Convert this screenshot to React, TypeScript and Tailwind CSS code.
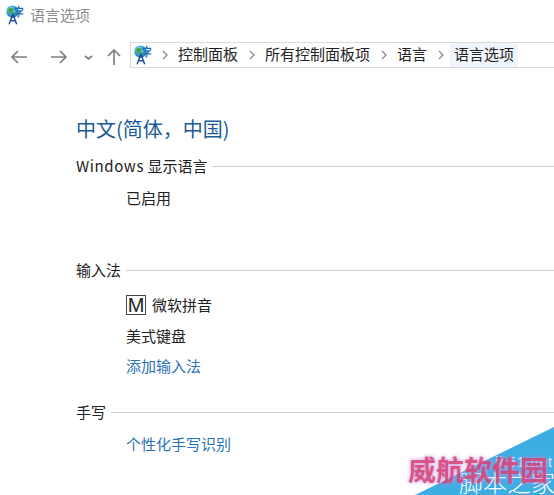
import React from 'react';

const cjk = '"Noto Sans CJK SC", "Liberation Sans", sans-serif';

function LangIcon() {
  return (
    <svg width="20" height="20" viewBox="0 0 22 24" className="shrink-0">
      <defs>
        <radialGradient id="globe" cx="0.4" cy="0.35" r="0.7">
          <stop offset="0" stopColor="#9fe0f0" />
          <stop offset="0.6" stopColor="#2f9fd0" />
          <stop offset="1" stopColor="#1f5fa8" />
        </radialGradient>
      </defs>
      <circle cx="8" cy="8" r="7.5" fill="url(#globe)" />
      <path d="M3 5 C5 3 8 3 9 5 C10 7 7 8 7 10 C6 12 4 10 3 8 Z" fill="#4aa03c" />
      <path d="M10 10 C12 9 13 10 13 12 L10 13 Z" fill="#5aae46" />
      <path d="M4 23 L8.5 11 L13 23 M5.8 19 H11.2" fill="none" stroke="#1f4f9c" strokeWidth="1.8" />
      <path d="M10 4 H21 M15.5 1 V4 M11 4 V6 M20 4 V6 M12 7 H19 L15.5 10 V14 L14 14.5 M10 10.5 H21" fill="none" stroke="#1f6fc0" strokeWidth="1.5" />
    </svg>
  );
}

function Crumb({ label, last }: { label: string; last?: boolean }) {
  return (
    <>
      <svg width="8" height="10" viewBox="0 0 8 10" className="ml-[5px] mr-[4px] shrink-0">
        <path d="M2 1 L6 5 L2 9" fill="none" stroke="#8a8a8a" strokeWidth="1.3" />
      </svg>
      <span className={last ? 'bg-[#f0f5fb] h-[24px] leading-[22px] ml-[1px] px-[4px] text-[#222]' : 'px-[5px] leading-[22px] h-[24px] text-[#222]'}>{label}</span>
    </>
  );
}

function Section({ title, children }: { title: React.ReactNode; children?: React.ReactNode }) {
  return (
    <div>
      <div className="flex items-center gap-[5px] h-[22px]">
        <span className="text-[15px] text-[#222] whitespace-nowrap">{title}</span>
        <div className="flex-1 h-px bg-[#cfcfcf]" />
      </div>
      {children}
    </div>
  );
}

export default function App() {
  return (
    <div className="relative w-[554px] h-[495px] overflow-hidden bg-white" style={{ fontFamily: cjk }}>
      <div className="flex items-center h-[30px] pl-[5px] gap-[5px]">
        <LangIcon />
        <span className="text-[15px] text-[#8c8c8c]">语言选项</span>
      </div>

      <div className="flex items-center h-[30px] mt-[10px]">
        <svg width="130" height="24" viewBox="0 0 130 24" className="shrink-0">
          <g fill="none" stroke="#7f7f7f" strokeWidth="1.7">
            <path d="M27 14 H12 M18 8 L12 14 L18 20" />
            <path d="M51 14 H66 M60 8 L66 14 L60 20" />
            <path d="M85 13 L88.5 16 L92 13" />
            <path d="M114 22 V7 M108 13 L114 7 L120 13" />
          </g>
        </svg>
        <div className="flex items-center h-[26px] w-[424px] border-y border-l border-[#d9d9d9] text-[15px] whitespace-nowrap">
          <div className="ml-[2px] mr-[3px]"><LangIcon /></div>
          <Crumb label="控制面板" />
          <Crumb label="所有控制面板项" />
          <Crumb label="语言" />
          <Crumb label="语言选项" last />
        </div>
      </div>

      <div className="pl-[76px] pt-[44px]">
        <h1 className="text-[20px] leading-[30px] text-[#1a5a96] font-normal">中文(简体，中国)</h1>
        <div className="mt-[11px]">
          <Section title={<><span className="tracking-[0.6px]">Windows</span> 显示语言</>}>
            <div className="pl-[50px] pt-[10px] h-[82px] text-[15px] leading-[22px] text-[#222]">已启用</div>
          </Section>
        </div>
        <Section title="输入法">
          <div className="pl-[50px] pt-[14px] flex flex-col text-[15px] text-[#222]">
            <div className="flex items-center gap-[6px] h-[20px]">
              <span className="w-[20px] h-[20px] border border-[#444] flex items-center justify-center text-[20px] leading-none" style={{ fontFamily: '"Liberation Sans", sans-serif' }}>M</span>
              <span>微软拼音</span>
            </div>
            <div className="mt-[11px] h-[20px] leading-[20px]">美式键盘</div>
            <div className="mt-[10px] h-[20px] leading-[20px] text-[#2a73b5]">添加输入法</div>
          </div>
        </Section>
        <div className="mt-[25px]">
          <Section title="手写">
            <div className="pl-[50px] pt-[11px] text-[15px] leading-[20px] text-[#2a73b5]">个性化手写识别</div>
          </Section>
        </div>
      </div>

      <svg width="139" height="68" viewBox="0 0 139 68" className="absolute right-0 bottom-0">
        <path d="M0 68 L139 0 V68 Z" fill="#3caee4" />
      </svg>
      <span className="absolute left-[495px] top-[454px] text-[14px] leading-[16px] text-white/80 tracking-[1px]" style={{ fontFamily: '"Liberation Sans", sans-serif' }}>jb51.net</span>
      <span className="absolute left-[459px] top-[469px] text-[24px] leading-[26px] font-light text-white whitespace-nowrap">脚本之家</span>
      <span className="absolute left-[408px] top-[454px] text-[28px] leading-[30px] font-bold text-[#d83a6a]/80 whitespace-nowrap [text-shadow:0_0_4px_#c890e0]">威航软件园</span>
    </div>
  );
}
